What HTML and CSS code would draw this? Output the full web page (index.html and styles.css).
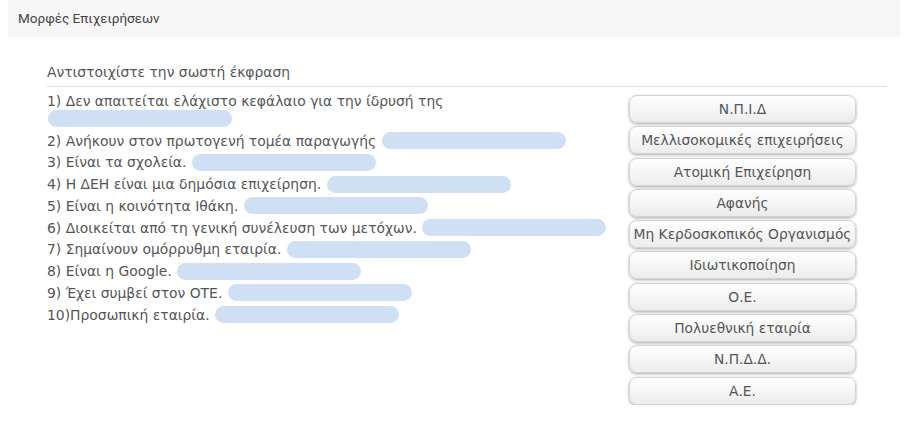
FILE: index.html
```html
<!DOCTYPE html>
<html lang="el">
<head>
<meta charset="utf-8">
<title>Μορφές Επιχειρήσεων</title>
<link rel="stylesheet" href="styles.css">
</head>
<body>
<div class="header">Μορφές Επιχειρήσεων</div>
<div class="panel">
  <div class="title">Αντιστοιχίστε την σωστή έκφραση</div>
  <div class="content">
    <div class="questions">
      <div class="q">1) Δεν απαιτείται ελάχιστο κεφάλαιο για την ίδρυσή της <span class="slot"></span></div>
      <div class="q">2) Ανήκουν στον πρωτογενή τομέα παραγωγής <span class="slot"></span></div>
      <div class="q">3) Είναι τα σχολεία. <span class="slot"></span></div>
      <div class="q">4) Η ΔΕΗ είναι μια δημόσια επιχείρηση. <span class="slot"></span></div>
      <div class="q">5) Είναι η κοινότητα Ιθάκη. <span class="slot"></span></div>
      <div class="q">6) Διοικείται από τη γενική συνέλευση των μετόχων. <span class="slot"></span></div>
      <div class="q">7) Σημαίνουν ομόρρυθμη εταιρία. <span class="slot"></span></div>
      <div class="q">8) Είναι η Google. <span class="slot"></span></div>
      <div class="q">9) Έχει συμβεί στον ΟΤΕ. <span class="slot"></span></div>
      <div class="q">10)Προσωπική εταιρία. <span class="slot"></span></div>
    </div>
    <div class="answers">
      <div class="btn">Ν.Π.Ι.Δ</div>
      <div class="btn">Μελλισοκομικές επιχειρήσεις</div>
      <div class="btn">Ατομική Επιχείρηση</div>
      <div class="btn">Αφανής</div>
      <div class="btn">Μη Κερδοσκοπικός Οργανισμός</div>
      <div class="btn">Ιδιωτικοποίηση</div>
      <div class="btn">Ο.Ε.</div>
      <div class="btn">Πολυεθνική εταιρία</div>
      <div class="btn">Ν.Π.Δ.Δ.</div>
      <div class="btn">Α.Ε.</div>
    </div>
  </div>
</div>
</body>
</html>
```
FILE: styles.css
```css
html, body {
  margin: 0;
  padding: 0;
  background: #ffffff;
}
body {
  padding: 0 6px 0 8px;
  font-family: "DejaVu Sans", Verdana, sans-serif;
  color: #555555;
}
.header {
  height: 37px;
  background: #f6f6f6;
  font-family: Roboto, "Liberation Sans", sans-serif;
  font-size: 13.5px;
  line-height: 37px;
  padding-left: 10px;
  color: #444444;
}
.panel {
  margin: 25px 13px 0 39px;
}
.title {
  font-size: 13.9px;
  line-height: 20px;
  padding-bottom: 4px;
  border-bottom: 1px solid #dddddd;
}
.content {
  display: flex;
  justify-content: space-between;
  padding-top: 3px;
}
.questions {
  width: 572px;
  font-size: 13.9px;
}
.q {
  line-height: 18px;
  padding: 1.875px 0;
}
.slot {
  display: inline-block;
  width: 184px;
  height: 17px;
  border-radius: 9px;
  background: #cfe0f4;
  vertical-align: top;
  margin-top: 0.5px;
  margin-left: 1px;
}
.answers {
  width: 227px;
  margin-right: 31px;
  padding-top: 5px;
  display: flex;
  flex-direction: column;
  gap: 3.3px;
}
.btn {
  height: 26px;
  line-height: 26px;
  border: 1px solid #d4d4d4;
  border-radius: 8px;
  background: linear-gradient(#ffffff, #ececec);
  box-shadow: 0 1px 3px rgba(0, 0, 0, 0.35);
  text-align: center;
  font-size: 13.8px;
  color: #555555;
  white-space: nowrap;
}
```
